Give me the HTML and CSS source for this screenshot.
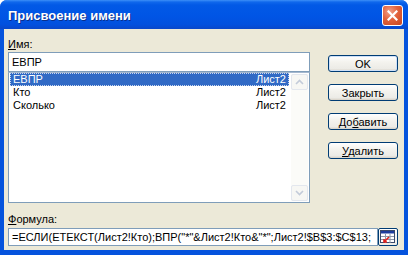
FILE: index.html
```html
<!DOCTYPE html>
<html lang="ru">
<head>
    <meta charset="UTF-8">
    <title>Присвоение имени</title>
    <link rel="stylesheet" href="styles.css">
</head>
<body>
    <div class="window">
        <!-- Заголовок окна -->
        <div class="titlebar">
            <span class="title">Присвоение имени</span>
            <button class="close" title="Закрыть">
                <svg width="11" height="11" viewBox="0 0 11 11">
                    <path d="M1.5 1.5 L9.5 9.5 M9.5 1.5 L1.5 9.5" stroke="#fff" stroke-width="2.2" stroke-linecap="square"/>
                </svg>
            </button>
        </div>

        <div class="dialog">
            <div class="top">
                <div class="names">
                    <div class="label"><u>И</u>мя:</div>
                    <div class="field">ЕВПР</div>
                    <div class="listbox">
                        <div class="rows">
                            <div class="row selected"><span>ЕВПР</span><span>Лист2</span></div>
                            <div class="row"><span>Кто</span><span>Лист2</span></div>
                            <div class="row"><span>Сколько</span><span>Лист2</span></div>
                        </div>
                        <div class="scrollbar">
                            <div class="arrow">
                                <svg width="9" height="6" viewBox="0 0 9 6"><path d="M1 5 L4.5 1.5 L8 5" fill="none" stroke="#c3cbd9" stroke-width="1.6"/></svg>
                            </div>
                            <div class="track"></div>
                            <div class="arrow">
                                <svg width="9" height="6" viewBox="0 0 9 6"><path d="M1 1 L4.5 4.5 L8 1" fill="none" stroke="#c3cbd9" stroke-width="1.6"/></svg>
                            </div>
                        </div>
                    </div>
                </div>

                <div class="buttons">
                    <button class="btn default">OK</button>
                    <button class="btn">Закрыть</button>
                    <button class="btn">До<u>б</u>авить</button>
                    <button class="btn"><u>У</u>далить</button>
                </div>
            </div>

            <div class="label formula-label"><u>Ф</u>ормула:</div>
            <div class="formula-row">
                <div class="field formula">=ЕСЛИ(ЕТЕКСТ(Лист2!Кто);ВПР("*"&amp;Лист2!Кто&amp;"*";Лист2!$B$3:$C$13;</div>
                <button class="refbtn">
                    <svg width="16" height="14" viewBox="0 0 16 14">
                        <rect x="0.5" y="0.5" width="14" height="12" fill="#fff" stroke="#3a4a6b"/>
                        <rect x="1" y="1" width="13" height="2.5" fill="#1c3c9c"/>
                        <path d="M1 6.5 H14 M1 9.5 H14 M5.5 4 V13 M10 4 V13" stroke="#8c96a8" stroke-width="1"/>
                        <path d="M9 7 L4 12 M4 9 V12 H7" fill="none" stroke="#e0201b" stroke-width="1.6"/>
                    </svg>
                </button>
            </div>
        </div>
    </div>
</body>
</html>
```

FILE: styles.css
```css
/* Диалог в стиле Windows XP */
body {
    margin: 0;
    font-family: "Liberation Sans", Arial, sans-serif;
    font-size: 11px;
    color: #000;
    background: #fff;
}

.window {
    width: 408px;
    height: 255px;
    display: flex;
    flex-direction: column;
    overflow: hidden;
    border-radius: 7px 7px 0 0;
    background: #0553dd;
}

.titlebar {
    height: 29px;
    flex: none;
    display: flex;
    align-items: center;
    justify-content: space-between;
    padding: 1px 5px 0 8px;
    box-sizing: border-box;
    background: linear-gradient(#3d8ff7 0, #1068ec 2px, #0259e6 5px, #0055e5 55%, #0250de 85%, #0a47c9 100%);
}

.title {
    color: #fff;
    font-size: 13px;
    font-weight: bold;
    text-shadow: 1px 1px 0 #0a2f8c;
}

.close {
    width: 21px;
    height: 21px;
    padding: 0;
    border: 1px solid #fff;
    border-radius: 3px;
    display: flex;
    align-items: center;
    justify-content: center;
    background: radial-gradient(circle at 35% 30%, #f0a08a 0, #e2623c 45%, #c9451e 100%);
}

.dialog {
    flex: 1;
    background: #ece9d8;
    margin: 0 4px 5px 4px;
    padding: 8px 6px 4px 4px;
    display: flex;
    flex-direction: column;
}

.top {
    display: flex;
    gap: 18px;
}

.names {
    width: 302px;
    display: flex;
    flex-direction: column;
}

.label {
    line-height: 14px;
    height: 14px;
    margin-bottom: 1px;
}

.field {
    height: 20px;
    box-sizing: border-box;
    border: 1px solid #7f9db9;
    background: #fff;
    padding: 0 3px;
    line-height: 18px;
    white-space: nowrap;
    overflow: hidden;
}

.listbox {
    height: 131px;
    box-sizing: border-box;
    border: 1px solid #7f9db9;
    border-top-color: #a5b8cf;
    background: #fff;
    display: flex;
}

.rows {
    flex: 1;
    padding-left: 1px;
}

.row {
    height: 13px;
    line-height: 13px;
    display: flex;
    justify-content: space-between;
    padding: 0 3px 0 3px;
}

.row.selected {
    background: #316ac5;
    color: #fff;
    outline: 1px dotted #c9d6ee;
    outline-offset: -1px;
}

.scrollbar {
    width: 17px;
    margin: 1px 1px 1px 2px;
    display: flex;
    flex-direction: column;
    background: #fbfbf8;
}

.arrow {
    height: 16px;
    box-sizing: border-box;
    border: 1px solid #e3e7ee;
    border-radius: 2px;
    background: #f7f7f4;
    display: flex;
    align-items: center;
    justify-content: center;
}

.track {
    flex: 1;
}

.buttons {
    display: flex;
    flex-direction: column;
    gap: 12px;
    padding-top: 18px;
}

.btn {
    width: 70px;
    height: 17px;
    padding: 0;
    font-family: inherit;
    font-size: 11px;
    color: #000;
    border: 1px solid #003c74;
    border-radius: 3px;
    background: linear-gradient(#ffffff 0, #f4f3ee 40%, #ecebe6 85%, #d6d0c5 100%);
}

.btn.default {
    box-shadow: inset 0 0 0 1px #cde0f8;
}

.formula-label {
    margin-top: 9px;
    margin-bottom: 2px;
}

.formula-row {
    display: flex;
}

.formula {
    width: 370px;
    height: 18px;
    line-height: 16px;
}

.refbtn {
    width: 20px;
    height: 18px;
    padding: 0;
    border: 1px solid #003c74;
    border-radius: 2px;
    background: linear-gradient(#ffffff, #ecebe6);
    display: flex;
    align-items: center;
    justify-content: center;
}
```
